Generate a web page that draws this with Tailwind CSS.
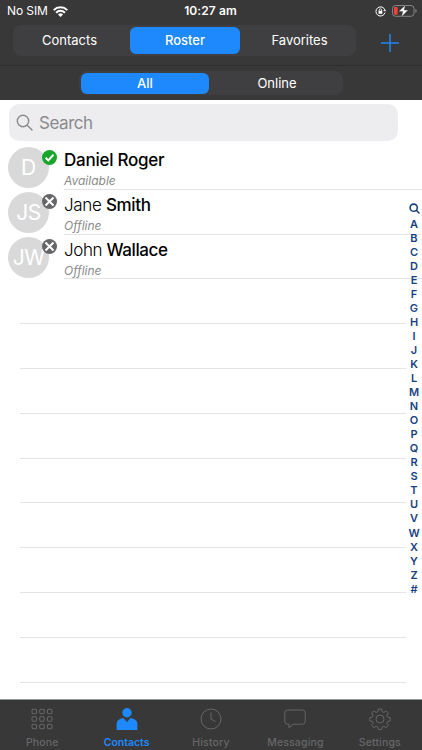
<!DOCTYPE html>
<html lang="en">
<head>
  <meta charset="UTF-8">
  <meta name="viewport" content="width=device-width, initial-scale=1.0">
  <title>Contacts</title>
  <script src="https://cdn.jsdelivr.net/npm/@tailwindcss/browser@4"></script>
</head>
<body class="bg-white font-['Inter','Liberation_Sans',sans-serif]">
  <div class="relative flex h-[750px] w-[422px] flex-col overflow-hidden">
    <header class="h-[100px] shrink-0 bg-[#383838] text-white">
      <!-- status bar -->
      <div class="grid h-[22px] grid-cols-3 items-center pr-2 pl-[7px] text-xs leading-none">
        <div class="flex items-center gap-[5px]">
          <span class="tracking-[-0.1px]">No SIM</span>
          <svg class="h-[11px] w-[15px]" viewBox="0 0 15 11" fill="none" stroke="#fff" stroke-width="2">
            <path d="M.7 4.1a9.7 9.7 0 0 1 13.6 0M3.1 6.7a6.2 6.2 0 0 1 8.8 0" />
            <path d="M7.5 11 5 8.5a3.6 3.6 0 0 1 5 0z" fill="#fff" stroke="none" />
          </svg>
        </div>
        <span class="text-center text-xs font-semibold tracking-[0.1px]">10:27 am</span>
        <div class="-mr-[3px] flex items-center justify-end gap-[6px]">
          <svg class="h-[11px] w-[11px]" viewBox="0 0 11 11" fill="none" stroke="#fff">
            <path d="M10 6.6A4.6 4.6 0 1 1 10 4.3M8.6 4.7h2.2" />
            <path d="M4.2 5V4a1.2 1.2 0 0 1 2.4 0v1" stroke-width=".8" />
            <path d="M3.5 4.8h3.8v3H3.5z" fill="#fff" stroke="none" />
          </svg>
          <svg class="h-[13px] w-[25px]" viewBox="0 0 25 13">
            <rect x=".5" y=".5" width="21.5" height="10.8" rx="3" fill="none" stroke="#858585" />
            <path d="M23.4 4.1c1.7.7 1.7 3 0 3.7z" fill="#858585" />
            <rect x="2" y="2.1" width="3.6" height="7.6" rx="1" fill="#f44336" />
            <path d="M13.5 0 6.7 6.6h4.1L9.3 12l6.9-6.9h-4.1z" fill="#fff" stroke="#383838" stroke-width=".4" />
          </svg>
        </div>
      </div>
      <!-- main tabs -->
      <div class="flex h-[44px] items-start border-b border-[#2e2e2e] pt-[3px] pl-[13px]">
        <div class="grid h-[31px] w-[343px] grid-cols-[117px_110px_116px] rounded-lg bg-[#3f3f41] py-[2px] text-center text-[13px] leading-[27px]">
          <span class="-ml-1">Contacts</span>
          <span class="h-[27px] rounded-md bg-[#1e88fd] font-medium">Roster</span>
          <span class="ml-[3px]">Favorites</span>
        </div>
        <svg class="mt-[9px] ml-[25px] h-[18px] w-[18px]" viewBox="0 0 18 18" stroke="#2386ee" stroke-width="1.5">
          <path d="M9 0v18M0 9h18" />
        </svg>
      </div>
      <!-- filter tabs -->
      <div class="pt-[5px] pl-[79px]">
        <div class="grid h-[24px] w-[264px] grid-cols-[128px_1fr] rounded-lg bg-[#3f3f41] py-[1.5px] pl-[2px] text-center text-[13px] leading-[21px]">
          <span class="h-[21px] rounded-md bg-[#1e88fd] font-medium">All</span>
          <span class="ml-[2px]">Online</span>
        </div>
      </div>
    </header>

    <main class="flex-1">
      <div class="mt-1 ml-[9px] flex h-[37px] w-[389px] items-center gap-[6px] rounded-[10px] bg-[#ededef] pl-[7px] text-[#8a8a8e]">
        <svg class="h-[17px] w-[17px]" viewBox="0 0 17 17" fill="none" stroke="currentColor" stroke-width="1.4" stroke-linecap="round">
          <circle cx="7" cy="7" r="5.7" />
          <path d="m11.2 11.2 4.8 4.8" />
        </svg>
        <span class="pt-[2px] text-[17px] tracking-[-0.45px]">Search</span>
      </div>

      <ul class="mt-1 text-black">
        <li class="flex h-[44.8px] pl-[8px]">
          <div class="relative mt-[2px] h-[41px] w-[41px] rounded-full bg-[#d9d9d9] text-center text-[21px] leading-[41px] text-white">D
            <svg class="absolute top-[2.5px] left-[33.5px] h-[15px] w-[15px]" viewBox="0 0 15 15" fill="none">
              <circle cx="7.5" cy="7.5" r="7.5" fill="#18a52b" />
              <path d="m3.6 7.8 2.7 2.6 5.2-5.6" stroke="#fff" stroke-width="2" />
            </svg>
          </div>
          <div class="ml-[15px] flex-1 border-b border-[#e4e4e6] pt-[4px]">
            <p class="text-[17px] leading-[22px] font-medium tracking-[-0.25px]">Daniel Roger</p>
            <p class="pt-px text-xs leading-[18px] text-[#8a8a8a] italic">Available</p>
          </div>
        </li>
        <li class="flex h-[44.8px] pl-[8px]">
          <div class="relative mt-[2px] h-[41px] w-[41px] rounded-full bg-[#d9d9d9] text-center text-[21px] leading-[41px] tracking-[-0.5px] text-white">JS
            <svg class="absolute top-[2.5px] left-[33.5px] h-[15px] w-[15px]" viewBox="0 0 15 15" fill="none">
              <circle cx="7.5" cy="7.5" r="7.5" fill="#656568" />
              <path d="m3.5 3.5 8 8M11.5 3.5l-8 8" stroke="#fff" stroke-width="2" />
            </svg>
          </div>
          <div class="ml-[15px] flex-1 border-b border-[#e4e4e6] pt-[4px]">
            <p class="text-[17px] leading-[22px] font-light tracking-[-0.35px]">Jane <span class="font-medium">Smith</span></p>
            <p class="pt-px text-xs leading-[18px] text-[#8a8a8a] italic">Offline</p>
          </div>
        </li>
        <li class="flex h-[44.8px] pl-[8px]">
          <div class="relative mt-[2px] h-[41px] w-[41px] rounded-full bg-[#d9d9d9] text-center text-[21px] leading-[41px] tracking-[-0.5px] text-white">JW
            <svg class="absolute top-[2.5px] left-[33.5px] h-[15px] w-[15px]" viewBox="0 0 15 15" fill="none">
              <circle cx="7.5" cy="7.5" r="7.5" fill="#656568" />
              <path d="m3.5 3.5 8 8M11.5 3.5l-8 8" stroke="#fff" stroke-width="2" />
            </svg>
          </div>
          <div class="ml-[15px] flex-1 border-b border-[#e4e4e6] pt-[4px]">
            <p class="text-[17px] leading-[22px] font-light tracking-[-0.4px]">John <span class="font-medium">Wallace</span></p>
            <p class="pt-px text-xs leading-[18px] text-[#8a8a8a] italic">Offline</p>
          </div>
        </li>
      </ul>
      <ul id="empty-rows" class="mr-4 ml-5"></ul>
    </main>

    <!-- letter index over the list -->
    <div class="absolute top-[201px] right-0 flex w-4 flex-col items-center text-[#16427f]">
      <svg class="my-[2px] h-[11px] w-[11px]" viewBox="0 0 11 11" fill="none" stroke="currentColor" stroke-width="1.6" stroke-linecap="round">
        <circle cx="4.7" cy="4.7" r="3.6" />
        <path d="m7.5 7.5 2.5 2.5" />
      </svg>
      <ul id="letters" class="mt-[0.5px] text-center text-[11px] font-semibold"></ul>
    </div>

    <nav class="grid h-[51px] shrink-0 grid-cols-5 border-t border-[#929a94] bg-[#383838] text-center text-[10.5px] leading-3 font-medium tracking-[0.15px] text-[#666668]">
      <div class="flex flex-col items-center pt-[8px]">
        <svg class="h-[22px] w-[22px]" viewBox="0 0 22 22" fill="none" stroke="currentColor" stroke-width="1.1">
          <rect x="1" y="1.2" width="4.6" height="4.6" rx="1.5" />
          <rect x="8.7" y="1.2" width="4.6" height="4.6" rx="1.5" />
          <rect x="16.4" y="1.2" width="4.6" height="4.6" rx="1.5" />
          <rect x="1" y="8.7" width="4.6" height="4.6" rx="1.5" />
          <rect x="8.7" y="8.7" width="4.6" height="4.6" rx="1.5" />
          <rect x="16.4" y="8.7" width="4.6" height="4.6" rx="1.5" />
          <rect x="1" y="16.2" width="4.6" height="4.6" rx="1.5" />
          <rect x="8.7" y="16.2" width="4.6" height="4.6" rx="1.5" />
          <rect x="16.4" y="16.2" width="4.6" height="4.6" rx="1.5" />
        </svg>
        <span class="mt-[7px]">Phone</span>
      </div>
      <div class="flex flex-col items-center pt-[8px] text-[#1e88fd]">
        <svg class="h-[22px] w-[22px]" viewBox="0 0 22 22" fill="currentColor">
          <circle cx="11" cy="4.7" r="4.7" />
          <path d="M.6 22v-6.3c0-2.9 2.3-4.6 5.6-5.4l1.3-.2L11 14l3.5-3.9 1.3.2c3.3.8 5.6 2.5 5.6 5.4V22z" />
        </svg>
        <span class="mt-[7px] font-semibold tracking-normal">Contacts</span>
      </div>
      <div class="flex flex-col items-center pt-[8px]">
        <svg class="h-[22px] w-[22px]" viewBox="0 0 22 22" fill="none" stroke="currentColor">
          <circle cx="11" cy="11" r="10" />
          <path d="M11 4.5V11l4.5 2.5" />
        </svg>
        <span class="mt-[7px]">History</span>
      </div>
      <div class="flex flex-col items-center pt-[8px]">
        <svg class="h-[22px] w-[22px]" viewBox="0 0 22 22" fill="none" stroke="currentColor">
          <path d="M3.5 2h15a2.7 2.7 0 0 1 2.7 2.7v8.8a2.7 2.7 0 0 1-2.7 2.7H9.2L5 19.8v-3.6H3.5A2.7 2.7 0 0 1 .8 13.5V4.7A2.7 2.7 0 0 1 3.5 2z" />
        </svg>
        <span class="mt-[7px]">Messaging</span>
      </div>
      <div class="flex flex-col items-center pt-[8px]">
        <svg class="h-[22px] w-[22px]" viewBox="0 0 22 22" fill="none" stroke="currentColor" stroke-linejoin="round">
          <circle cx="11" cy="11" r="4" />
          <path d="M9.4 1h3.2l.6 2.7 1.7.7 2.3-1.5 2.2 2.2-1.5 2.3.7 1.7 2.6.6v3.2l-2.6.6-.7 1.7 1.5 2.3-2.2 2.2-2.3-1.5-1.7.7-.6 2.6H9.4l-.6-2.6-1.7-.7-2.3 1.5-2.2-2.2 1.5-2.3-.7-1.7L.8 12.9V9.7l2.6-.6.7-1.7-1.5-2.3 2.2-2.2 2.3 1.5 1.7-.7z" />
        </svg>
        <span class="mt-[7px]">Settings</span>
      </div>
    </nav>
  </div>

  <script>
    const emptyRows = document.getElementById('empty-rows');
    for (let i = 0; i < 9; i++) {
      const li = document.createElement('li');
      li.className = 'h-[44.8px] border-b border-[#e4e4e6]';
      emptyRows.appendChild(li);
    }

    const letters = document.getElementById('letters');
    for (const letter of 'ABCDEFGHIJKLMNOPQRSTUVWXYZ#') {
      const li = document.createElement('li');
      li.className = 'h-[14.06px] leading-[14px]';
      li.textContent = letter;
      letters.appendChild(li);
    }
  </script>
</body>
</html>
